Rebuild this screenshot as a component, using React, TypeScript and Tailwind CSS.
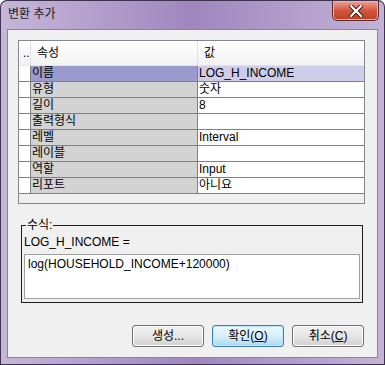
import React from 'react';

const rows: { name: string; value: string }[] = [
  { name: '이름', value: 'LOG_H_INCOME' },
  { name: '유형', value: '숫자' },
  { name: '길이', value: '8' },
  { name: '출력형식', value: '' },
  { name: '레벨', value: 'Interval' },
  { name: '레이블', value: '' },
  { name: '역할', value: 'Input' },
  { name: '리포트', value: '아니요' },
];

const font = "font-['Liberation_Sans','Noto_Sans_CJK_KR',sans-serif]";

const Button: React.FC<{ focused?: boolean; children: React.ReactNode }> = ({ focused, children }) => (
  <button
    className={
      focused
        ? 'w-[72px] h-[22px] rounded-[3px] border border-[#3c7fb1] bg-gradient-to-b from-[#eaf6fd] via-[#d9f0fc] to-[#a7d9f5] text-[12px] text-black shadow-[inset_0_0_0_1px_#bfe6fa]'
        : 'w-[72px] h-[22px] rounded-[3px] border border-[#707070] bg-gradient-to-b from-[#f2f2f2] via-[#e6e6e6] to-[#d0d0d0] text-[12px] text-black shadow-[inset_0_0_0_1px_#fbfbfb]'
    }
  >
    {children}
  </button>
);

export default function App() {
  return (
    <div
      className={`${font} w-[385px] h-[365px] flex flex-col rounded-t-[7px] bg-gradient-to-r from-[#c6b7d8] via-[#9f87be] to-[#c4b3d6] shadow-[inset_0_0_0_1px_#3d3350] text-black`}
    >
      {/* 제목 표시줄 */}
      <div className="h-[29px] flex items-start justify-between pl-[8px] pr-[6px]">
        <span className="mt-[6px] text-[12px] leading-[16px] text-[#1a1a1a]">변환 추가</span>
        <div className="w-[47px] h-[20px] mt-[1px] rounded-b-[5px] border border-[#5a2a2a] border-t-0 bg-gradient-to-b from-[#e9a596] via-[#d2553f] to-[#c23a20] flex items-center justify-center shadow-[inset_0_0_0_1px_#f0b3a8]">
          <svg width="14" height="12" viewBox="0 0 14 12">
            <path d="M2 1 L12 11 M12 1 L2 11" stroke="#3a1010" strokeWidth="4" strokeLinecap="square" />
            <path d="M2 1 L12 11 M12 1 L2 11" stroke="#ffffff" strokeWidth="2.2" strokeLinecap="square" />
          </svg>
        </div>
      </div>

      {/* 본문 */}
      <div className="flex-1 mx-[7px] mb-[7px] border border-[#8f7fa6] bg-[#f0f0f0] flex flex-col">
        {/* 속성 표 */}
        <div className="ml-[10px] mt-[10px] w-[347px] h-[164px] border border-[#828790] bg-[#f0f0f0] flex flex-col text-[12px]">
          <div className="h-[25px] flex bg-gradient-to-b from-[#ffffff] to-[#f2f2f2] border-b border-[#e5e5e5]">
            <div className="w-[12px] border-r border-[#e2e2e2] pl-[4px] flex items-center">..</div>
            <div className="w-[167px] border-r border-[#e2e2e2] pl-[6px] flex items-center">속성</div>
            <div className="flex-1 pl-[6px] flex items-center">값</div>
          </div>
          {rows.map((r, i) => (
            <div key={r.name} className="h-[16px] flex border-b border-[#808080]">
              <div className="w-[12px] bg-white border-r border-[#808080]" />
              <div
                className={`w-[167px] border-r border-[#808080] pl-[1px] leading-[15px] ${
                  i === 0 ? 'bg-[#9a9acc]' : 'bg-[#d3d3d3]'
                }`}
              >
                {r.name}
              </div>
              <div className={`flex-1 pl-[1px] leading-[15px] ${i === 0 ? 'bg-[#cdcdea]' : 'bg-white'}`}>{r.value}</div>
            </div>
          ))}
        </div>

        {/* 수식 */}
        <fieldset className="ml-[13px] mt-[14px] w-[341px] h-[85px] border border-[#1e1e1e] px-[2px] text-[12px]">
          <legend className="ml-[2px] px-[1px] leading-[14px]">수식:</legend>
          <div className="leading-[14px] mt-[3px]">LOG_H_INCOME =</div>
          <div className="mt-[5px] w-[336px] h-[45px] border border-[#a0a0a0] bg-white pl-[3px] pt-[2px] leading-[14px]">
            log(HOUSEHOLD_INCOME+120000)
          </div>
        </fieldset>

        {/* 버튼 */}
        <div className="mt-[22px] mr-[13px] flex justify-end gap-[8px]">
          <Button>생성...</Button>
          <Button focused>
            확인(<span className="underline">O</span>)
          </Button>
          <Button>
            취소(<span className="underline">C</span>)
          </Button>
        </div>
      </div>
    </div>
  );
}
